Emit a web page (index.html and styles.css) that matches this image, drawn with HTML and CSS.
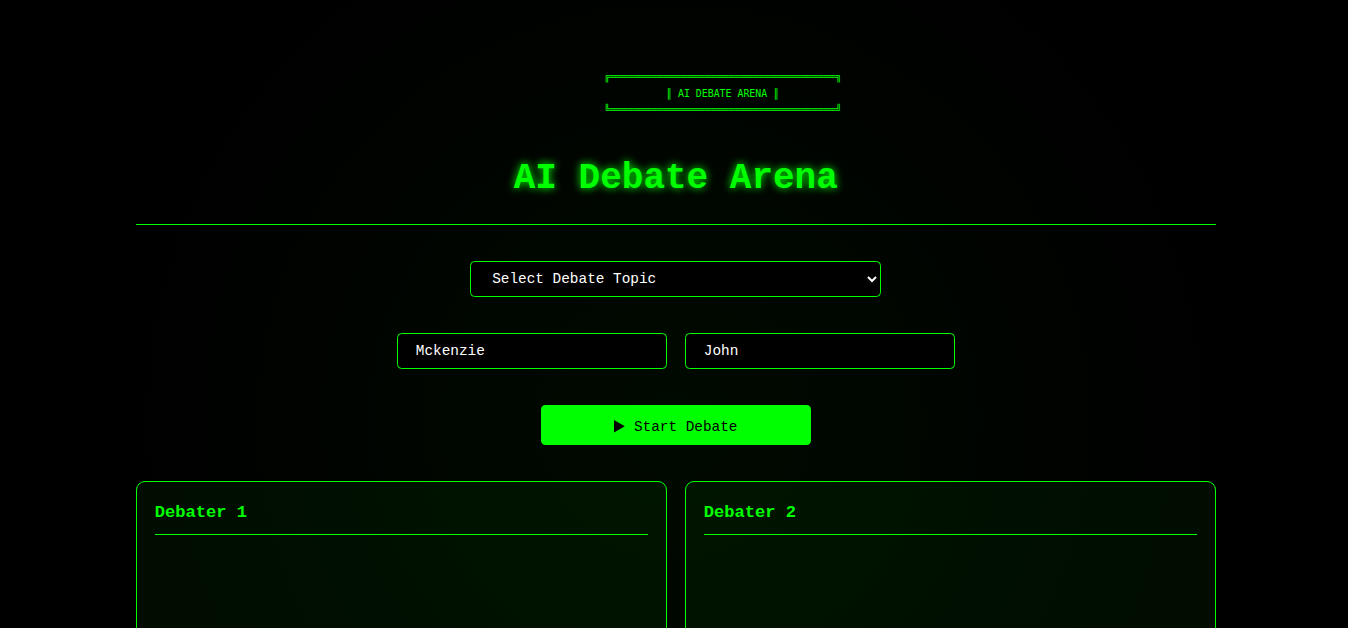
FILE: index.html
```html
<!DOCTYPE html>
<html lang="en">
<head>
<meta charset="utf-8">
<title>AI Debate Arena</title>
<link rel="stylesheet" href="styles.css">
</head>
<body>
<main class="container">
  <header class="header">
    <pre class="banner" aria-hidden="true">╔══════════════════════════════════════╗
║ AI DEBATE ARENA ║
╚══════════════════════════════════════╝</pre>
    <h1 class="title">AI Debate Arena</h1>
  </header>
  <form class="controls">
    <select class="field topic" aria-label="Debate topic">
      <option>Select Debate Topic</option>
    </select>
    <div class="names">
      <input class="field" type="text" value="Mckenzie" aria-label="Debater 1 name">
      <input class="field" type="text" value="John" aria-label="Debater 2 name">
    </div>
    <button class="start" type="button"><svg class="play" viewBox="0 0 12 12" preserveAspectRatio="none" aria-hidden="true"><path d="M0 0L12 6L0 12Z"/></svg><span>Start Debate</span></button>
  </form>
  <div class="arena">
    <section class="panel"><h2 class="panel-title">Debater 1</h2></section>
    <section class="panel"><h2 class="panel-title">Debater 2</h2></section>
  </div>
</main>
</body>
</html>
```
FILE: styles.css
```css
* {
  box-sizing: border-box;
}

html {
  background: #000;
}

body {
  margin: 0;
  padding-left: 4px;
  zoom: 0.9;
  overflow: hidden;
  font-family: "Courier New", "Courier Prime", "Nimbus Mono PS", FreeMono, "Liberation Mono", monospace;
  font-size: 16px;
  color: #0f0;
  background: radial-gradient(circle at center, #000a00 0%, #000 70%);
}

.container {
  max-width: 1200px;
  margin: 0 auto;
}

.header {
  padding: 77px 0 18px;
  border-bottom: 1px solid #0f0;
  text-align: center;
}

.banner {
  margin: 0 0 36px;
  padding-left: 104px;
  font-family: "DejaVu Sans Mono", monospace;
  font-size: 11px;
  line-height: 18px;
}

.title {
  margin: 0;
  font-size: 40px;
  line-height: 64px;
  text-shadow: 0 0 10px #0f0;
}

.controls {
  display: flex;
  flex-direction: column;
  align-items: center;
  gap: 40px;
  padding: 40px 0;
}

.names {
  display: flex;
  gap: 20px;
}

.field {
  width: 300px;
  height: 40px;
  padding: 0 20px;
  border: 1px solid #0f0;
  border-radius: 5px;
  background: #000;
  color: #fff;
  font: inherit;
}

.topic {
  width: 457px;
}

.start {
  display: flex;
  align-items: center;
  justify-content: center;
  gap: 10px;
  width: 300px;
  height: 44px;
  padding: 4px 0 0;
  border: 0;
  border-radius: 5px;
  background: #0f0;
  color: #000;
  font: inherit;
}

.play {
  width: 12px;
  height: 14px;
}

.arena {
  display: grid;
  grid-template-columns: 1fr 1fr;
  gap: 20px;
}

.panel {
  min-height: 400px;
  padding: 20px;
  border: 1px solid #0f0;
  border-radius: 10px;
  background: rgba(0, 255, 0, 0.05);
}

.panel-title {
  margin: 0;
  padding-bottom: 10px;
  border-bottom: 1px solid #0f0;
  font-size: 19px;
  line-height: 28px;
}
```
